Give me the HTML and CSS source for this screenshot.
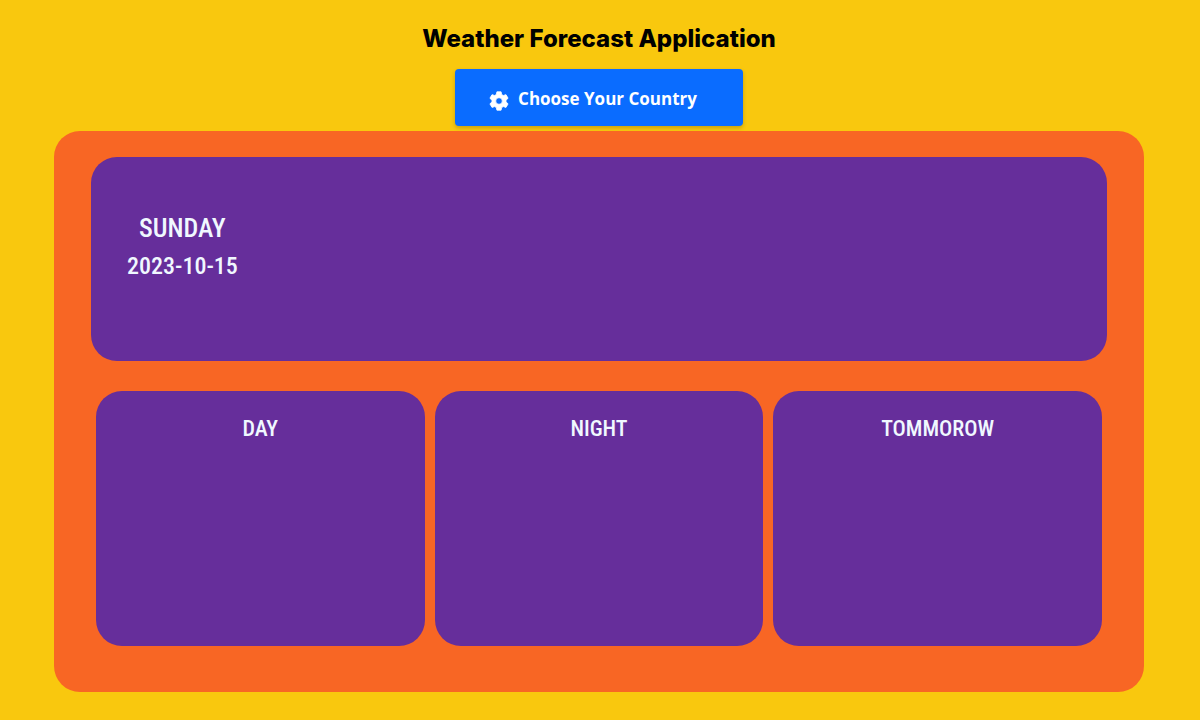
FILE: index.html
```html
<!DOCTYPE html>
<html lang="en">
<head>
<meta charset="utf-8">
<meta name="viewport" content="width=device-width, initial-scale=1">
<title>Weather Forecast Application</title>
<link rel="stylesheet" href="styles.css">
</head>
<body class="page">
<header class="header">
  <h1 class="title">Weather Forecast Application</h1>
  <button class="country-button" type="button">
    <svg class="gear" viewBox="0 0 24 24" aria-hidden="true"><path fill="currentColor" fill-rule="evenodd" stroke="currentColor" stroke-width="1" stroke-linejoin="round" d="M9.5 1h5l.7 3.3 2 1.1 3.2-1 2.5 4.300-2.500 2.300v2.200l2.500 2.200-2.500 4.300-3.200-1-2 1.100-.7 3.200h-5l-.7-3.200-2-1.100-3.200 1-2.500-4.300 2.500-2.200v-2.200L1.100 8.700l2.500-4.300 3.200 1 2-1.100zM12 8a4 4 0 1 0 0 8 4 4 0 0 0 0-8z"/></svg>
    <span>Choose Your Country</span>
  </button>
</header>
<main class="forecast">
  <section class="today">
    <div class="date-block">
      <h2 class="weekday">SUNDAY</h2>
      <time class="date" datetime="2023-10-15">2023-10-15</time>
    </div>
  </section>
  <div class="periods">
    <section class="period"><h3 class="period-title">DAY</h3></section>
    <section class="period"><h3 class="period-title">NIGHT</h3></section>
    <section class="period"><h3 class="period-title">TOMMOROW</h3></section>
  </div>
</main>
</body>
</html>
```
FILE: styles.css
```css
* { box-sizing: border-box; }

.page {
  margin: 0;
  padding: 21px 56px 28px 54px;
  min-height: 100vh;
  background: #f9c80e;
  display: flex;
  flex-direction: column;
}

.header {
  display: flex;
  flex-direction: column;
  align-items: center;
  gap: 12px;
  margin-bottom: 5px;
}

.title {
  margin: 0;
  font: 800 24px/36px Inter, "Liberation Sans", sans-serif;
  color: #000;
}

.country-button {
  display: flex;
  align-items: center;
  gap: 9px;
  padding: 17px 46px 14px 34px;
  border: 0;
  border-radius: 4px;
  background: #0a6cff;
  color: #fff;
  font: 700 17px/26px "Open Sans", "Noto Sans", sans-serif;
  box-shadow: 0 2px 4px rgb(0 0 0 / 20%);
  cursor: pointer;
}

.gear {
  width: 20px;
  height: 20px;
  margin-top: 4px;
}

.forecast {
  flex: 1;
  display: grid;
  grid-template-rows: 4fr 5fr;
  gap: 30px;
  padding: 26px 37px 46px;
  border-radius: 26px;
  background: #f86624;
}

.today,
.period {
  border-radius: 26px;
  background: #662e9b;
  color: #f0f8ff;
}

.today {
  display: flex;
  align-items: flex-start;
  padding: 52px 36px;
}

.date-block {
  text-align: center;
}

.weekday,
.date {
  display: block;
  margin: 0;
  font: 500 26px/38px "Roboto Condensed", "Liberation Sans Narrow", "DejaVu Sans Condensed", sans-serif;
}

.date {
  font-size: 24px;
}

.periods {
  display: grid;
  grid-template-columns: repeat(3, 1fr);
  gap: 10px;
  padding: 0 5px;
}

.period {
  padding: 20px;
}

.period-title {
  margin: 0;
  text-align: center;
  font: 500 22px/36px "Roboto Condensed", "Liberation Sans Narrow", "DejaVu Sans Condensed", sans-serif;
}
```
